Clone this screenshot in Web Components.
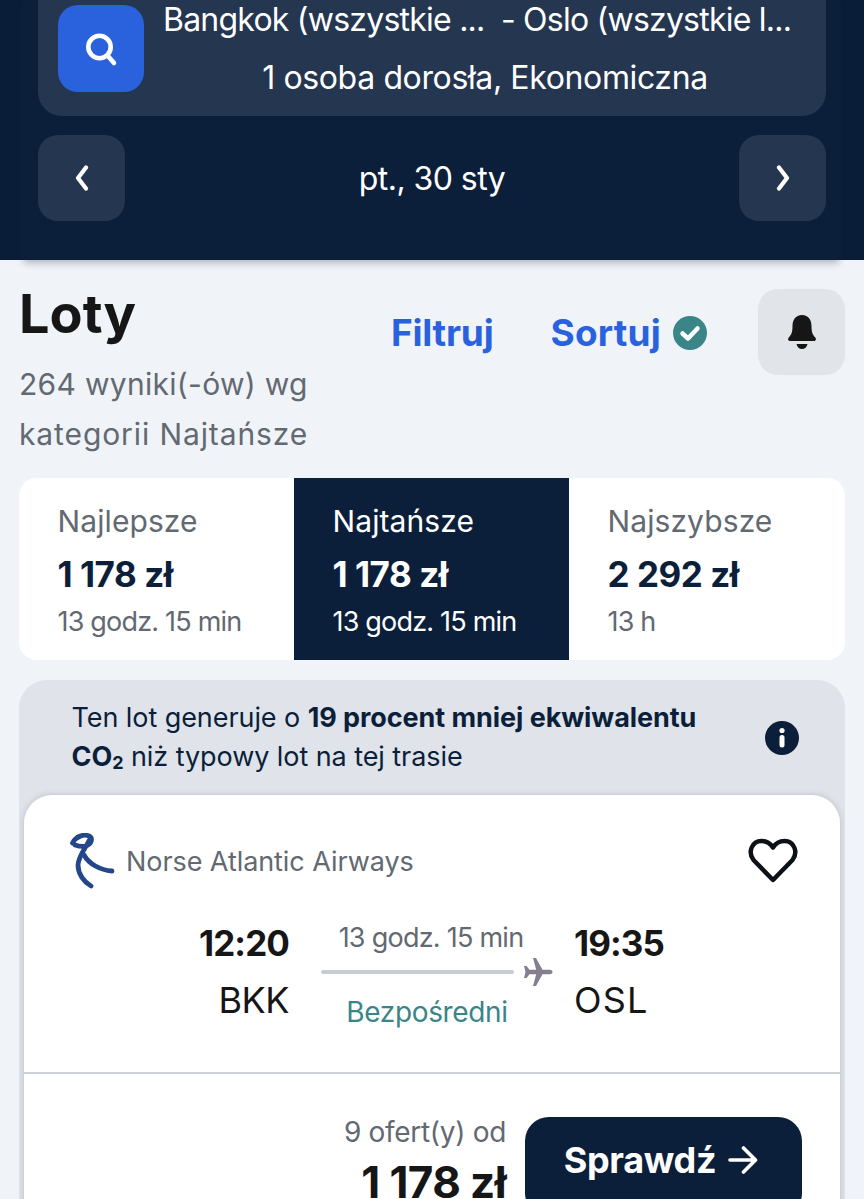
<!DOCTYPE html>
<html lang="pl"><head><meta charset="utf-8"><title>Loty</title>
<style>
html,body{margin:0;padding:0;height:1199px;overflow:hidden;background:#f0f4f9;font-family:Inter,"Noto Sans",sans-serif;}
app-page{display:block}
</style></head><body>
<app-page>
<search-header></search-header>
<results-head></results-head>
<sort-tabs></sort-tabs>
<flight-card></flight-card>
</app-page>
<script>
function def(name,html){customElements.define(name,class extends HTMLElement{constructor(){super();this.attachShadow({mode:'open'}).innerHTML=html;}});}
def('app-page','<style>:host{display:block}</style><slot></slot>');
def('search-header',`<style>
:host{display:block;height:260px;box-sizing:border-box;background:#0a1d38;padding:0 38px;position:relative;z-index:0;color:#fff;letter-spacing:-.55px}
:host::before{content:"";position:absolute;z-index:-1;left:23px;right:24px;top:0;bottom:0;background:#0b1f3a;box-shadow:0 4px 7px -1px rgba(30,40,60,.3)}
.panel{height:116px;box-sizing:border-box;background:#253650;border-radius:0 0 24px 24px;padding:5px 20px 0;display:flex;gap:20px}
.go{flex:none;width:86px;height:87px;border-radius:20px;background:#2a62de;display:flex;align-items:center;justify-content:center}
.txt{flex:1;min-width:0;text-align:center;font-size:32px;font-weight:400}
.l1{height:30px;line-height:30px;white-space:pre;text-align:left;letter-spacing:-.77px;margin-left:-1px}
.l2{margin-top:28px;line-height:30px;letter-spacing:-.37px}
.nav{display:flex;align-items:center;justify-content:space-between;margin-top:19px;font-size:32px}
.b{width:87px;height:86px;border-radius:20px;background:#253650;display:flex;align-items:center;justify-content:center}
</style>
<div class="panel"><div class="go"><svg width="36" height="36" viewBox="0 0 36 36" fill="none" stroke="#fff" stroke-width="4.6" stroke-linecap="round"><circle cx="16.5" cy="16" r="11.2"/><path d="M24.500 24.500 31 32"/></svg></div>
<div class="txt"><div class="l1">Bangkok (wszystkie ...  - Oslo (wszystkie l...</div><div class="l2">1 osoba dorosła, Ekonomiczna</div></div></div>
<div class="nav"><div class="b"><svg width="18" height="26" viewBox="0 0 18 26" fill="none" stroke="#fff" stroke-width="4.200" stroke-linecap="round" stroke-linejoin="round"><path d="M13 2.500 5 13l8 10.500"/></svg></div><span>pt., 30 sty</span><div class="b"><svg width="18" height="26" viewBox="0 0 18 26" fill="none" stroke="#fff" stroke-width="4.200" stroke-linecap="round" stroke-linejoin="round"><path d="M5 2.500 13 13 5 23.500"/></svg></div></div>`);
def('results-head',`<style>
:host{display:grid;grid-template-columns:1fr auto;height:218px;box-sizing:border-box;padding:23px 19px 0 19px}
h1{margin:0;font-size:54px;line-height:62px;font-weight:700;color:#161616}
p{margin:14px 0 0;font-size:30px;line-height:50px;color:#626971;letter-spacing:.3px}
p span{letter-spacing:.9px}
.acts{display:flex;align-items:flex-start;padding-top:6px}
.a{font-size:37px;font-weight:700;color:#2a62de;line-height:74px;letter-spacing:-.2px;margin-top:7px}
.s{margin-left:57px;display:flex;align-items:center;gap:12px;height:74px;letter-spacing:.2px}
.bell{margin-left:51px;width:87px;height:86px;border-radius:20px;background:#e1e4e9;display:flex;align-items:center;justify-content:center}
</style>
<div><h1>Loty</h1><p>264 wyniki(-ów) wg<br><span>kategorii Najtańsze</span></p></div>
<div class="acts"><span class="a">Filtruj</span><span class="a s">Sortuj<svg width="34" height="34" viewBox="0 0 34 34"><circle cx="17" cy="17" r="17" fill="#3a8587"/><path d="M9.500 17.500 15 22.500 24.500 12.500" fill="none" stroke="#fff" stroke-width="4.500" stroke-linecap="round" stroke-linejoin="round"/></svg></span>
<div class="bell"><svg width="30" height="36" viewBox="0 0 30 36" fill="#161616"><path d="M15 1c6.500 0 9.500 5 9.500 11 0 6 1 8.500 3.800 11.500 1.300 1.500.6 3.500-1.500 3.500H3.200c-2.100 0-2.800-2-1.500-3.500C4.500 20.500 5.500 18 5.500 12 5.500 6 8.500 1 15 1Z"/><path d="M9.500 30h11c-.5 3-2.800 5-5.500 5s-5-2-5.500-5Z"/></svg></div></div>`);
def('sort-tabs',`<style>
:host{display:grid;grid-template-columns:275px 275px 276px;margin:0 19px;height:182px;background:#fff;border-radius:18px;overflow:hidden;color:#0b1f3a}
.t{padding:24px 0 0 38.500px;box-sizing:border-box}
.on{background:#0b1f3a;color:#fff}
.n{font-size:30px;line-height:38px;color:#626971;letter-spacing:.1px}
.p{font-size:35px;line-height:44px;font-weight:700;margin-top:12px;letter-spacing:-.45px}
.d{font-size:27px;line-height:36px;color:#626971;margin-top:8px;letter-spacing:-.8px}
.on .n,.on .d{color:#fff}
</style>
<div class="t"><div class="n">Najlepsze</div><div class="p">1 178 zł</div><div class="d">13 godz. 15 min</div></div>
<div class="t on"><div class="n">Najtańsze</div><div class="p">1 178 zł</div><div class="d">13 godz. 15 min</div></div>
<div class="t"><div class="n">Najszybsze</div><div class="p">2 292 zł</div><div class="d">13 h</div></div>`);
def('flight-card',`<style>
:host{display:block;margin:20px 19px 0;height:600px;background:#e0e4ea;border-radius:28px 28px 0 0;color:#0b1f3a;overflow:hidden}
.eco{height:115px;box-sizing:border-box;padding:18px 46px 0 52.500px;display:flex;align-items:center;justify-content:space-between;font-size:27px;line-height:39px;letter-spacing:-.07px}
.eco>div{align-self:flex-start}
.eco svg{margin-top:-18px;flex:none}
sub{font-size:18px;vertical-align:baseline;position:relative;top:3px;font-weight:700}
.card{margin:0 5px;height:500px;background:#fff;border-radius:28px 28px 0 0;box-shadow:0 0 6px rgba(40,50,70,.22)}
.top{height:279px;box-sizing:border-box;border-bottom:2px solid #cdd0d6;padding:37px 0 0 42px}
.air{display:flex;align-items:center;gap:11px;height:58px;font-size:27px;color:#626971;letter-spacing:-.07px;padding-right:42px}
.air .logo{margin-left:4px}
.air span{flex:1;margin-left:-1px}
.row{display:grid;grid-template-columns:90px 232px auto;column-gap:32px;margin:31px 0 0 133px;align-items:start}
.row>div:nth-child(3){margin-left:-11px}
.time{font-size:35px;line-height:44px;font-weight:700;color:#161616;letter-spacing:-.9px}
.ap{font-size:36px;line-height:44px;color:#161616;margin-top:13px;letter-spacing:-.5px}
.osl{letter-spacing:1.2px}
.r{text-align:right}
.mid{text-align:center;color:#626971;font-size:27px;letter-spacing:-.75px;line-height:36px;margin-top:-1px}
.dur{padding-right:12px}
.line{display:flex;align-items:center;height:24px;margin:4px 0 4px}
.line i{flex:1;height:4px;border-radius:2px;background:#c9cbd3}
.line svg{margin-left:9px;flex:none}
.dir{color:#3a8587;margin:10px 20px 0 0;font-size:28px;letter-spacing:-.35px}
.bot{display:flex;justify-content:flex-end;padding:43px 38px 0 0;gap:19px}
.price{text-align:right}
.of{font-size:28px;line-height:36px;color:#626971;letter-spacing:-.3px;margin-top:-3px}
.am{font-size:44px;line-height:52px;font-weight:700;color:#161616;margin-top:6px;letter-spacing:-.6px}
.btn{width:277px;height:100px;background:#0b1f3a;border-radius:24px;color:#fff;font-size:36px;font-weight:700;display:flex;align-items:flex-start;justify-content:center;gap:12px;line-height:86px;letter-spacing:-.3px}
.btn svg{margin:27px 5px 0 0}
</style>
<div class="eco"><div>Ten lot generuje o <b>19 procent mniej ekwiwalentu<br>CO<sub>2</sub></b> niż typowy lot na tej trasie</div>
<svg width="34" height="34" viewBox="0 0 34 34"><circle cx="17" cy="17" r="17" fill="#0b1f3a"/><circle cx="17" cy="9.500" r="2.600" fill="#fff"/><rect x="14.500" y="14" width="5" height="12.500" rx="2.500" fill="#fff"/></svg></div>
<div class="card"><div class="top">
<div class="air"><svg class="logo" width="46" height="56" viewBox="0 0 46 56" fill="none" stroke="#24468a" stroke-linecap="round" stroke-linejoin="round" stroke-width="4.800"><path d="M2.500 10C6 3 14 1 19 3c4 2 3 8-3 10-4 1-8 0-11-1"/><path d="M20 6C16 14 8 24 8 32c0 9 6 17 13 21"/><path d="M14 22c5 9 16 15 28 16"/></svg><span>Norse Atlantic Airways</span>
<svg width="50" height="46" viewBox="0 0 50 46" fill="none" stroke="#0c1118" stroke-width="4.500" stroke-linejoin="round"><path d="M25 42 5.500 22C-.500 14 4 3 13.500 3 18.500 3 22.500 5.500 25 9.500 27.500 5.500 31.500 3 36.500 3 46 3 50.500 14 44.500 22Z"/></svg></div>
<div class="row"><div class="r"><div class="time">12:20</div><div class="ap">BKK</div></div>
<div class="mid"><div class="dur">13 godz. 15 min</div><div class="line"><i></i><svg width="30" height="30" viewBox="0 0 30 30" fill="#847f90"><path d="M29.500 15c0 1.500-1.500 2.200-3 2.200h-7L13 29h-3l3.200-11.800H6.500L3.500 21H1l1.500-6L1 9h2.500l3 3.800h6.700L10 1h3l6.500 11.800h7c1.500 0 3 .7 3 2.200Z"/></svg></div><div class="dir">Bezpośredni</div></div>
<div><div class="time">19:35</div><div class="ap osl">OSL</div></div></div>
</div>
<div class="bot"><div class="price"><div class="of">9 ofert(y) od</div><div class="am">1 178 zł</div></div>
<div class="btn">Sprawdź<svg width="30" height="32" viewBox="0 0 30 32" fill="none" stroke="#fff" stroke-width="3.600" stroke-linecap="round" stroke-linejoin="round"><path d="M2 16h25M15.500 4 27.500 16 15.500 28"/></svg></div></div>
</div>`);
</script>
</body></html>
